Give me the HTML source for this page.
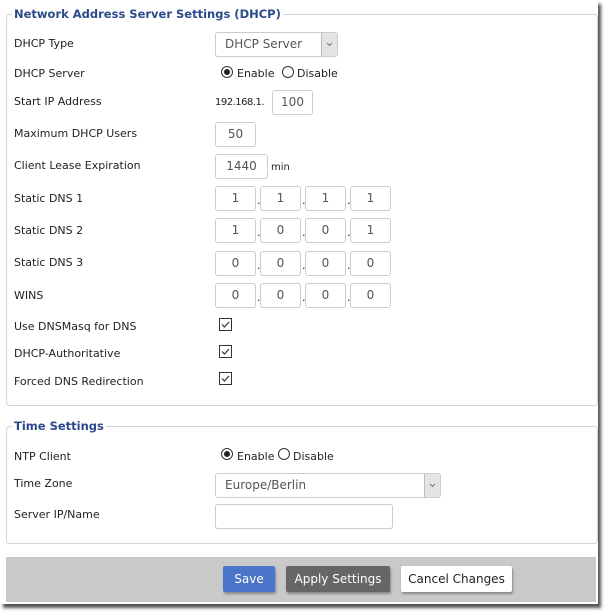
<!DOCTYPE html>
<html><head><style>
*{box-sizing:border-box}
body{margin:0;width:606px;height:615px;background:#fff;position:relative;overflow:hidden;font-family:"DejaVu Sans","Liberation Sans",sans-serif;font-size:11px;color:#222}
.a{position:absolute}
.frame{position:absolute;left:0;top:0;width:598px;height:604px;background:#fff;box-shadow:3px 4px 3px #555}
.fs{position:absolute;border:1px solid #d4d4d4;border-radius:4px}
.lg{position:absolute;background:#fff;color:#2b4a8b;font-weight:bold;font-size:11.5px;padding:0 2px}
.lb{position:absolute;left:14px;font-size:11px}
.in{position:absolute;border:1px solid #ccc;border-radius:3px;background:#fff;text-align:center;color:#555;font-size:12px;height:25px;line-height:23px}
.sel{position:absolute;border:1px solid #ccc;border-radius:3px;background:#fff;color:#555;font-size:12px;height:25px;line-height:23px;padding-left:9px}
.sel .ar{position:absolute;right:0;top:0;width:16px;height:23px;background:#e4e4e4;border-left:1px solid #bbb}
.rd{position:absolute;width:12px;height:12px;border:1px solid #333;border-radius:50%}
.rd.on::after{content:"";position:absolute;left:2px;top:2px;width:6px;height:6px;border-radius:50%;background:#222}
.dot{position:absolute;font-size:11px}
.btn{position:absolute;height:26px;line-height:26px;text-align:center;font-size:12px;border-radius:2px;box-shadow:1px 2px 2px #888}
</style></head><body>
<div class="frame"></div>
<div class="fs" style="left:6px;top:14px;width:592px;height:392px"></div>
<div class="lg" style="left:12px;top:7px">Network Address Server Settings (DHCP)</div>
<div class="lb" style="top:37px">DHCP Type</div>
<div class="sel" style="left:215px;top:32px;width:123px">DHCP Server<div class="ar"><svg width="15" height="23"><path d="M5 10l2.5 2.5 2.5-2.5" fill="none" stroke="#777"/></svg></div></div>
<div class="lb" style="top:67px">DHCP Server</div>
<div class="rd on" style="left:221px;top:66px"></div><div class="a" style="left:237px;top:67px">Enable</div>
<div class="rd" style="left:282px;top:66px"></div><div class="a" style="left:297px;top:67px">Disable</div>
<div class="lb" style="top:95px">Start IP Address</div>
<div class="a" style="left:215px;top:97px;font-size:10px;letter-spacing:-0.5px">192.168.1.</div>
<div class="in" style="left:272px;top:90px;width:41px">100</div>
<div class="lb" style="top:127px">Maximum DHCP Users</div>
<div class="in" style="left:215px;top:122px;width:41px">50</div>
<div class="lb" style="top:159px">Client Lease Expiration</div>
<div class="in" style="left:215px;top:154px;width:53px">1440</div><div class="a" style="left:271px;top:162px;font-size:10px">min</div>

<div class="lb" style="top:192px">Static DNS 1</div>
<div class="in" style="left:215px;top:186px;width:41px">1</div><div class="dot" style="left:257px;top:194px">.</div>
<div class="in" style="left:260px;top:186px;width:41px">1</div><div class="dot" style="left:302px;top:194px">.</div>
<div class="in" style="left:305px;top:186px;width:41px">1</div><div class="dot" style="left:347px;top:194px">.</div>
<div class="in" style="left:350px;top:186px;width:41px">1</div>
<div class="lb" style="top:224px">Static DNS 2</div>
<div class="in" style="left:215px;top:218px;width:41px">1</div><div class="dot" style="left:257px;top:226px">.</div>
<div class="in" style="left:260px;top:218px;width:41px">0</div><div class="dot" style="left:302px;top:226px">.</div>
<div class="in" style="left:305px;top:218px;width:41px">0</div><div class="dot" style="left:347px;top:226px">.</div>
<div class="in" style="left:350px;top:218px;width:41px">1</div>
<div class="lb" style="top:256px">Static DNS 3</div>
<div class="in" style="left:215px;top:251px;width:41px">0</div><div class="dot" style="left:257px;top:259px">.</div>
<div class="in" style="left:260px;top:251px;width:41px">0</div><div class="dot" style="left:302px;top:259px">.</div>
<div class="in" style="left:305px;top:251px;width:41px">0</div><div class="dot" style="left:347px;top:259px">.</div>
<div class="in" style="left:350px;top:251px;width:41px">0</div>
<div class="lb" style="top:289px">WINS</div>
<div class="in" style="left:215px;top:283px;width:41px">0</div><div class="dot" style="left:257px;top:291px">.</div>
<div class="in" style="left:260px;top:283px;width:41px">0</div><div class="dot" style="left:302px;top:291px">.</div>
<div class="in" style="left:305px;top:283px;width:41px">0</div><div class="dot" style="left:347px;top:291px">.</div>
<div class="in" style="left:350px;top:283px;width:41px">0</div>

<div class="lb" style="top:320px">Use DNSMasq for DNS</div>
<div class="lb" style="top:347px">DHCP-Authoritative</div>
<div class="lb" style="top:375px">Forced DNS Redirection</div>
<svg class="a" style="left:219px;top:318px" width="13" height="70"><g fill="#fff" stroke="#333"><rect x=".5" y=".5" width="12" height="12"/><rect x=".5" y="27.5" width="12" height="12"/><rect x=".5" y="54.5" width="12" height="12"/></g><g fill="none" stroke="#333" stroke-width="1.2"><path d="M3 6.5l2.5 2.5 4.5-5"/><path d="M3 33.5l2.5 2.5 4.5-5"/><path d="M3 60.5l2.5 2.5 4.5-5"/></g></svg>

<div class="fs" style="left:6px;top:426px;width:592px;height:118px"></div>
<div class="lg" style="left:12px;top:419px">Time Settings</div>
<div class="lb" style="top:450px">NTP Client</div>
<div class="rd on" style="left:221px;top:448px"></div><div class="a" style="left:237px;top:450px">Enable</div>
<div class="rd" style="left:278px;top:448px"></div><div class="a" style="left:293px;top:450px">Disable</div>
<div class="lb" style="top:477px">Time Zone</div>
<div class="sel" style="left:215px;top:473px;width:226px">Europe/Berlin<div class="ar"><svg width="15" height="23"><path d="M5 10l2.5 2.5 2.5-2.5" fill="none" stroke="#777"/></svg></div></div>
<div class="lb" style="top:508px">Server IP/Name</div>
<div class="in" style="left:215px;top:504px;width:178px"></div>

<div class="a" style="left:6px;top:557px;width:590px;height:45px;background:#c9c9c9"></div>
<div class="btn" style="left:223px;top:566px;width:52px;background:#4a75c8;color:#fff">Save</div>
<div class="btn" style="left:286px;top:566px;width:104px;background:#666;color:#fff">Apply Settings</div>
<div class="btn" style="left:401px;top:566px;width:111px;background:#fff;color:#222">Cancel Changes</div>
</body></html>
